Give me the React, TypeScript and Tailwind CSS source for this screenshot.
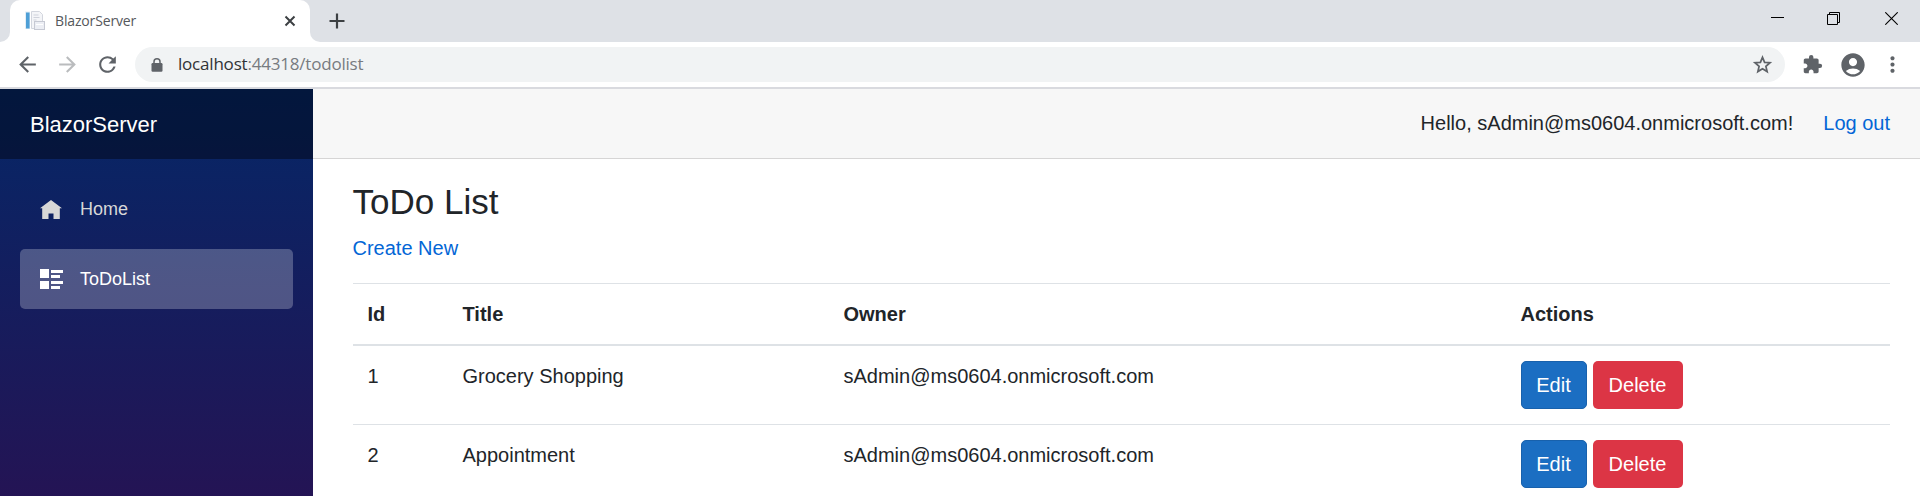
import React from "react";
import {
  MdArrowBack,
  MdArrowForward,
  MdRefresh,
  MdExtension,
  MdAccountCircle,
  MdMoreVert,
} from "react-icons/md";

const todos = [
  { id: 1, title: "Grocery Shopping", owner: "sAdmin@ms0604.onmicrosoft.com" },
  { id: 2, title: "Appointment", owner: "sAdmin@ms0604.onmicrosoft.com" },
];

function TabFavicon() {
  return (
    <svg width="20" height="20" viewBox="0 0 20 20" className="shrink-0">
      <rect x="0" y="0.5" width="5" height="17.5" fill="#e4eef6" />
      <rect x="1" y="1.5" width="3.6" height="16" fill="#4e9fd6" />
      <path d="M6.5 .5h8l3 3v14h-11z" fill="#f4f5f8" stroke="#d3d6de" />
      <path d="M8.5 4h5M8.5 6.5h6M8.5 9h3" stroke="#cfd2db" />
      <rect x="9.5" y="10.5" width="10" height="8" fill="#eceef4" stroke="#c6c9d3" />
      <path d="M11 13.5h7" stroke="#fff" />
    </svg>
  );
}

function LockIcon() {
  return (
    <svg width="12" height="14" viewBox="0 0 12 14" className="shrink-0">
      <path d="M3 6V3.800a3 3 0 0 1 6 0V6" fill="none" stroke="#5f6368" strokeWidth="1.500" />
      <rect x="0.500" y="5" width="11" height="8.800" rx="1.200" fill="#5f6368" />
    </svg>
  );
}

function StarIcon() {
  return (
    <svg width="21" height="21" viewBox="0 0 24 24" className="ml-auto shrink-0">
      <path
        d="M12 3.800l2.400 5.700 6.200.500-4.700 4.100 1.400 6L12 16.900l-5.300 3.200 1.400-6L3.400 10l6.200-.500z"
        fill="none"
        stroke="#5f6368"
        strokeWidth="2"
      />
    </svg>
  );
}

function TabStrip() {
  return (
    <div className="flex h-[42px] bg-[#dee1e6]">
      <div className="w-[10px] bg-white">
        <div className="h-full rounded-br-[10px] bg-[#dee1e6]" />
      </div>
      <div className="flex w-[300px] items-center rounded-t-[10px] bg-white pl-[15px] pr-[14px]">
        <TabFavicon />
        <span className="ml-[10px] whitespace-nowrap font-['Open_Sans',sans-serif] text-[14px] leading-5 tracking-[-0.15px] text-[#55585c]">
          BlazorServer
        </span>
        <svg width="12" height="12" viewBox="0 0 12 12" className="ml-auto">
          <path d="M1.500 1.500l9 9M10.500 1.500l-9 9" stroke="#3c4043" strokeWidth="2" />
        </svg>
      </div>
      <div className="w-[10px] bg-white">
        <div className="h-full rounded-bl-[10px] bg-[#dee1e6]" />
      </div>
      <svg width="16" height="16" viewBox="0 0 16 16" className="ml-[9px] mt-[13px]">
        <path d="M8 .5v15M.5 8h15" stroke="#3c4043" strokeWidth="2.200" />
      </svg>
      <div className="ml-auto flex pr-[22px] pt-3">
        <svg width="13" height="13" viewBox="0 0 13 13">
          <path d="M0 5.500h13" stroke="#000" />
        </svg>
        <svg width="13" height="13" viewBox="0 0 13 13" className="ml-[43px]">
          <path d="M.5 2.500h10v10H.500zM2.500 2.500V.500h10v10h-2" fill="none" stroke="#000" />
        </svg>
        <svg width="13" height="13" viewBox="0 0 13 13" className="ml-[45px]">
          <path d="M.3 .3l12.400 12.400M12.700 .3L.3 12.700" stroke="#000" strokeWidth="1.100" />
        </svg>
      </div>
    </div>
  );
}

function Toolbar() {
  return (
    <div className="flex h-[47px] items-center border-b-2 border-[#d9dadf] bg-white px-[15px]">
      <MdArrowBack size={25} color="#5f6368" />
      <MdArrowForward size={25} color="#babcbe" className="ml-[15px]" />
      <MdRefresh size={25} color="#5f6368" className="ml-[15px]" />
      <div className="ml-[15px] flex h-[35px] flex-1 items-center rounded-full bg-[#f1f3f4] pl-[16px] pr-[12px]">
        <LockIcon />
        <span className="ml-[15px] whitespace-nowrap pb-[2px] font-['Open_Sans',sans-serif] text-[17px] leading-6 tracking-[-0.2px] text-[#777b80]">
          <span className="text-[#303236]">localhost</span>:44318/todolist
        </span>
        <StarIcon />
      </div>
      <MdExtension size={21} color="#5f6368" className="ml-[17px]" />
      <MdAccountCircle size={28} color="#5f6368" className="ml-[16px]" />
      <MdMoreVert size={25} color="#5f6368" className="ml-[13px]" />
    </div>
  );
}

function Sidebar() {
  return (
    <aside className="flex h-[1000px] w-[313px] shrink-0 flex-col bg-[linear-gradient(180deg,#052767_0%,#3a0647_70%)]">
      <div className="flex h-[70px] shrink-0 items-center bg-black/40 pl-[30px] pt-[2px] text-[22px] text-white">
        BlazorServer
      </div>
      <nav className="flex flex-col gap-[10px] px-5 pt-5 text-[18px]">
        <a className="flex h-[60px] items-center rounded-[5px] pl-5 text-[#d7d7d7]">
          <svg width="22" height="19" viewBox="0 0 22 19">
            <path d="M11 0L0 8.300h2.200V19h6.300v-5.500h5V19h6.300V8.300H22z" fill="currentColor" />
          </svg>
          <span className="ml-[18px]">Home</span>
        </a>
        <a className="flex h-[60px] items-center rounded-[5px] bg-white/25 pl-5 text-white">
          <svg width="23" height="20" viewBox="0 0 23 20">
            <path
              d="M0 0h9v9H0zM0 12h9v8H0zM11 1h12v3H11zM11 6h9v3h-9zM11 12h12v3H11zM11 17h9v3h-9z"
              fill="currentColor"
            />
          </svg>
          <span className="ml-[17px]">ToDoList</span>
        </a>
      </nav>
    </aside>
  );
}

function TodoTable() {
  return (
    <table className="mt-5 w-full table-fixed border-collapse text-left">
      <colgroup>
        <col className="w-[95px]" />
        <col className="w-[381px]" />
        <col className="w-[677px]" />
        <col />
      </colgroup>
      <thead>
        <tr className="h-[61px] border-b-2 border-t border-[#dee2e6] font-bold">
          <th className="px-[15px]">Id</th>
          <th className="px-[15px]">Title</th>
          <th className="px-[15px]">Owner</th>
          <th className="px-[15px]">Actions</th>
        </tr>
      </thead>
      <tbody>
        {todos.map((todo) => (
          <tr key={todo.id} className="border-b border-[#dee2e6] align-top">
            <td className="p-[15px]">{todo.id}</td>
            <td className="p-[15px]">{todo.title}</td>
            <td className="p-[15px]">{todo.owner}</td>
            <td className="p-[15px]">
              <div className="flex gap-[6px]">
                <button className="h-12 w-[66px] rounded-[5px] border border-[#1861ac] bg-[#1b6ec2] text-white">
                  Edit
                </button>
                <button className="h-12 w-[90px] rounded-[5px] bg-[#dc3545] text-white">Delete</button>
              </div>
            </td>
          </tr>
        ))}
      </tbody>
    </table>
  );
}

export default function App() {
  return (
    <div className="flex h-[496px] flex-col overflow-hidden bg-white font-['Liberation_Sans',Arial,sans-serif] text-[20px] leading-[30px] text-[#212529]">
      <TabStrip />
      <Toolbar />
      <div className="flex min-h-0 flex-1 items-start overflow-hidden">
        <Sidebar />
        <main className="min-w-0 flex-1">
          <header className="flex h-[70px] items-center justify-end gap-[30px] border-b border-[#d6d5d5] bg-[#f7f7f7] pb-[2px] pr-[30px]">
            <span>Hello, sAdmin@ms0604.onmicrosoft.com!</span>
            <a className="text-[#0366d6]">Log out</a>
          </header>
          <section className="pl-[39.5px] pr-[30px] pt-[22px]">
            <h1 className="mb-[10px] text-[35px] leading-[42px]">ToDo List</h1>
            <p>
              <a className="text-[#0366d6]">Create New</a>
            </p>
            <TodoTable />
          </section>
        </main>
      </div>
    </div>
  );
}
